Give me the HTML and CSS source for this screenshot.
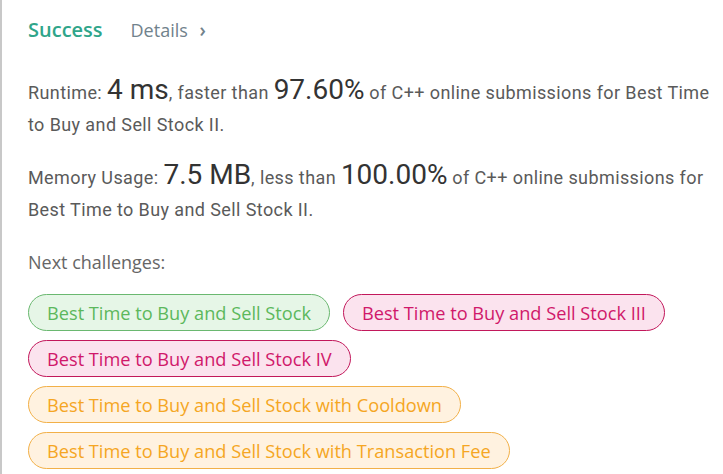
FILE: index.html
```html
<!DOCTYPE html>
<html>
<head>
<meta charset="utf-8">
<link rel="stylesheet" href="styles.css">
</head>
<body>
<div class="panel">
  <div class="header">
    <span class="status">Success</span>
    <span class="details">Details <span class="chev">›</span></span>
  </div>
  <p class="stat">Runtime: <span class="big">4 ms</span>, faster than <span class="big">97.60%</span> of C++ online submissions for Best Time to Buy and Sell Stock II.</p>
  <p class="stat">Memory Usage: <span class="big">7.5 MB</span>, less than <span class="big">100.00%</span> of C++ online submissions for Best Time to Buy and Sell Stock II.</p>
  <p class="next">Next challenges:</p>
  <div class="pills">
    <span class="pill easy">Best Time to Buy and Sell Stock</span>
    <span class="pill hard">Best Time to Buy and Sell Stock III</span>
    <span class="pill hard">Best Time to Buy and Sell Stock IV</span>
    <span class="pill medium">Best Time to Buy and Sell Stock with Cooldown</span>
    <span class="pill medium">Best Time to Buy and Sell Stock with Transaction Fee</span>
  </div>
</div>
</body>
</html>
```
FILE: styles.css
```css
html, body {
  margin: 0;
  height: 100%;
  background: #fff;
}
body {
  font-family: "Open Sans", "Noto Sans", sans-serif;
}
.panel {
  box-sizing: border-box;
  min-height: 100%;
  border-left: 2px solid #c8c8c8;
  padding: 16px 4px 0 26px;
}
.header {
  display: flex;
  align-items: baseline;
  gap: 28px;
  height: 32px;
}
.status {
  font-size: 20px;
  font-weight: 600;
  color: #2fa58a;
}
.details {
  font-size: 18px;
  color: #71828c;
}
.chev {
  margin-left: 7px;
  font-size: 19px;
  font-weight: 600;
}
.stat {
  margin: 29px 0 0;
  font-family: Roboto, "Open Sans", sans-serif;
  font-size: 18px;
  letter-spacing: 0.4px;
  line-height: 32px;
  color: #5a5a5a;
}
.stat + .stat {
  margin-top: 21px;
}
.big {
  font-size: 28px;
  letter-spacing: 0;
  line-height: 20px;
  color: #333;
}
.next {
  margin: 20px 0 0;
  font-size: 18px;
  line-height: 32px;
  color: #666;
}
.pills {
  margin-top: 16px;
  display: flex;
  flex-wrap: wrap;
  gap: 9px 13px;
}
.pill {
  box-sizing: border-box;
  height: 37px;
  display: inline-flex;
  align-items: center;
  padding: 0 18px;
  border-radius: 19px;
  border: 1px solid;
  font-size: 18.2px;
}
.easy {
  color: #5cb85c;
  border-color: #6ab870;
  background: #e6f6e7;
}
.hard {
  color: #d0186a;
  border-color: #c2185b;
  background: #fbe3ee;
}
.medium {
  color: #f5a623;
  border-color: #f2b048;
  background: #fff2e0;
}
```
